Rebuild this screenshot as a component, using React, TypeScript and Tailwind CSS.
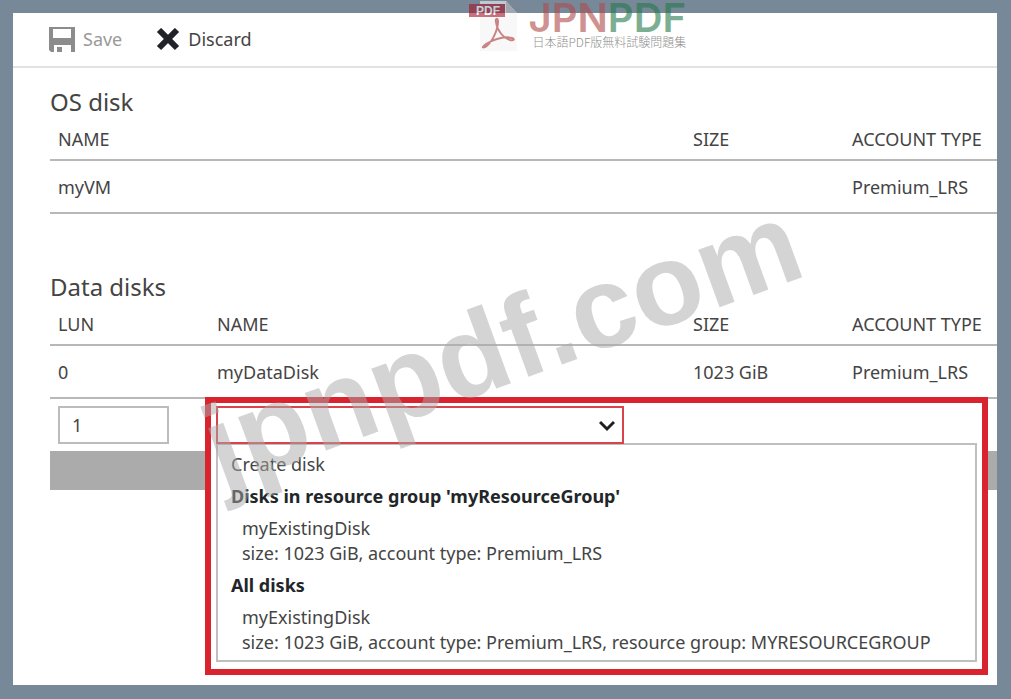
import React from 'react';

const existingDisk = 'size: 1023 GiB, account type: Premium_LRS';

const SaveIcon = () => (
  <svg viewBox="0 0 26 26" className="w-[26px] h-[26px]" fill="#8c8c8c" aria-hidden="true">
    <path fillRule="evenodd" d="M0 0h26v25h-4v-7H5v7H2l-2-2zM4 2v9h18V2z" />
    <path d="M8 20h5v5H8z" />
  </svg>
);

const DiscardIcon = () => (
  <svg viewBox="0 0 24 24" className="w-6 h-6" stroke="#1f2226" strokeWidth="6" aria-hidden="true">
    <path d="M3 2l18 18M21 2L3 20" />
  </svg>
);

const Logo = () => (
  <div className="absolute top-0 left-1/2 -ml-[37px] flex gap-0.5 opacity-60 pointer-events-none">
    <svg viewBox="0 0 58 52" className="w-[58px] h-[52px] shrink-0">
      <path d="M11 1h26l11 12v38H11z" fill="#f4f4f4" />
      <path d="M37 1l11 12H37z" fill="#bdbdbd" />
      <path d="M0 4h36v13H0z" fill="#a31428" />
      <text x="7" y="15" fill="#fff" className="font-bold text-[12px] font-['Liberation_Sans']">PDF</text>
      <path
        d="M16 47c5-2 13-15 13-26 0-3-3-3-2 1 1 8 7 16 14 18 4 1 5-1 2-2-8-2-19 2-26 6-4 3-4 4-1 3z"
        fill="none"
        stroke="#a83232"
        strokeWidth="2"
      />
    </svg>
    <div className="whitespace-nowrap">
      <div className="text-[40px] leading-9 font-semibold font-['Inter',sans-serif]">
        <span className="text-[#af4b4b]">JPN</span>
        <span className="text-[#257a4b]">PDF</span>
      </div>
      <div className="pl-1 text-[12px] leading-3 font-light text-[#444] font-['Noto_Sans_CJK_JP',sans-serif]">
        日本語PDF版無料試験問題集
      </div>
    </div>
  </div>
);

const DiskPicker = () => (
  <div className="absolute -top-0.5 -left-[4px] right-[9px] z-10 border-[6px] border-[#d9232e] bg-white pt-[3px] px-[5px] pb-[7px]">
    <select
      aria-label="Disk name"
      className="relative z-10 block w-[408px] h-[38px] appearance-none border-2 border-[#d9444c] bg-white"
    >
      <option></option>
      <option>Create disk</option>
      <option>myExistingDisk</option>
    </select>
    <svg viewBox="0 0 16 12" className="absolute z-10 left-[388px] top-[17px] w-4 h-3" fill="none" stroke="#1f1f1f" strokeWidth="3" aria-hidden="true">
      <path d="M1 2l7 7 7-7" />
    </svg>
    <div className="-mt-px border-2 border-[#bfbfbf] pl-[13px] pt-[7px] pb-[5px] leading-[25px] whitespace-nowrap">
      <div>Create disk</div>
      <div className="mt-[7px] font-bold text-[#222629]">Disks in resource group 'myResourceGroup'</div>
      <div className="mt-[7px] pl-[11px]">
        <div>myExistingDisk</div>
        <div>{existingDisk}</div>
      </div>
      <div className="mt-[7px] font-bold text-[#222629]">All disks</div>
      <div className="mt-[7px] pl-[11px]">
        <div>myExistingDisk</div>
        <div>{existingDisk}, resource group: MYRESOURCEGROUP</div>
      </div>
    </div>
  </div>
);

const th = 'h-10 px-2 text-left font-normal';
const td = 'h-[53px] px-2 pt-0.5';

const App = () => {
  return (
    <div className="relative min-h-screen overflow-hidden flex bg-[#778899] p-[13px] pr-3.5 pb-3.5 text-[18px] text-[#444] font-['Noto_Sans',sans-serif]">
      <main className="flex-1 bg-white">
        <header className="h-[55px] flex items-center gap-[34px] pl-9 border-b-2 border-[#e2e2e2]">
          <button className="flex items-center gap-2 text-[#999]">
            <SaveIcon /> Save
          </button>
          <button className="flex items-center gap-2">
            <DiscardIcon /> Discard
          </button>
        </header>

        <section className="pl-[37px] pt-[18px]">
          <h2 className="mb-0.5 text-2xl leading-8">OS disk</h2>
          <table className="w-full table-fixed border-collapse">
            <thead>
              <tr className="border-b-2 border-[#b8b8b8]">
                <th className={th}>NAME</th>
                <th className={th + ' w-[159px]'}>SIZE</th>
                <th className={th + ' w-[153px]'}>ACCOUNT TYPE</th>
              </tr>
            </thead>
            <tbody>
              <tr className="border-b-2 border-[#b8b8b8]">
                <td className={td}>myVM</td>
                <td className={td}></td>
                <td className={td}>Premium_LRS</td>
              </tr>
            </tbody>
          </table>
        </section>

        <section className="pl-[37px] pt-[57px]">
          <h2 className="mb-0.5 text-2xl leading-8">Data disks</h2>
          <table className="w-full table-fixed border-collapse">
            <thead>
              <tr className="border-b-2 border-[#b8b8b8]">
                <th className={th + ' w-[159px]'}>LUN</th>
                <th className={th}>NAME</th>
                <th className={th + ' w-[159px]'}>SIZE</th>
                <th className={th + ' w-[153px]'}>ACCOUNT TYPE</th>
              </tr>
            </thead>
            <tbody>
              <tr className="border-b-2 border-[#b8b8b8]">
                <td className={td}>0</td>
                <td className={td}>myDataDisk</td>
                <td className={td}>1023 GiB</td>
                <td className={td}>Premium_LRS</td>
              </tr>
              <tr>
                <td className="h-[53px] px-2">
                  <input
                    aria-label="LUN"
                    defaultValue="1"
                    className="block w-[111px] h-[38px] px-3 border-2 border-[#bcbcbc]"
                  />
                </td>
                <td colSpan={3} className="relative p-0 align-top">
                  <DiskPicker />
                </td>
              </tr>
            </tbody>
          </table>
          <div className="h-[39px] bg-[#ababab]"></div>
        </section>
      </main>

      <Logo />
      <div className="absolute top-[286px] left-1/2 -ml-[317px] -rotate-20 text-[116px] leading-none font-bold text-[#a9a9a9]/50 font-['Liberation_Sans',sans-serif] pointer-events-none z-20">
        jpnpdf.com
      </div>
    </div>
  );
};

export default App;
